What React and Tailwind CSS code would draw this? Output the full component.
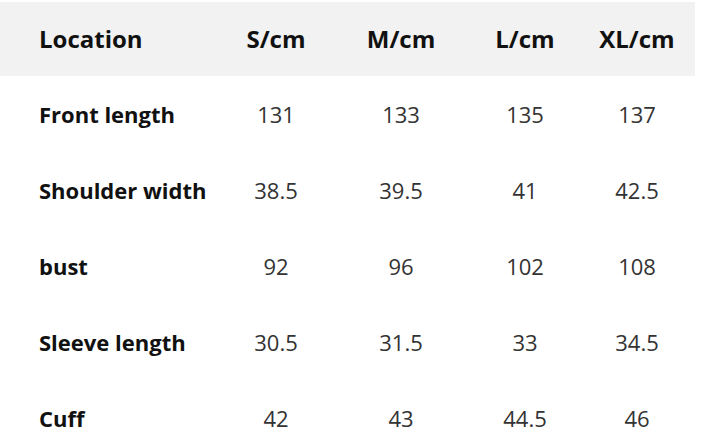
const sizes = ["S/cm", "M/cm", "L/cm", "XL/cm"];

const rows = [
  { label: "Front length", values: ["131", "133", "135", "137"] },
  { label: "Shoulder width", values: ["38.5", "39.5", "41", "42.5"] },
  { label: "bust", values: ["92", "96", "102", "108"] },
  { label: "Sleeve length", values: ["30.5", "31.5", "33", "34.5"] },
  { label: "Cuff", values: ["42", "43", "44.5", "46"] },
];

const cols = "grid grid-cols-[214px_124px_126px_122px_102px] items-center";

export default function App() {
  return (
    <div className="w-[728px] h-[445px] bg-white pt-[2px] font-['Open_Sans',sans-serif]">
      <div className="w-[695px]">
        <div className={`${cols} h-[74px] bg-[#f2f2f2] text-[24px] font-bold text-[#111]`}>
          <div className="pl-[39px]">Location</div>
          {sizes.map((s) => (
            <div key={s} className="text-center">{s}</div>
          ))}
        </div>
        {rows.map((r) => (
          <div key={r.label} className={`${cols} h-[76px] text-[22px]`}>
            <div className="pl-[39px] font-bold text-[#111]">{r.label}</div>
            {r.values.map((v, i) => (
              <div key={i} className="text-center text-[#333]">{v}</div>
            ))}
          </div>
        ))}
      </div>
    </div>
  );
}
